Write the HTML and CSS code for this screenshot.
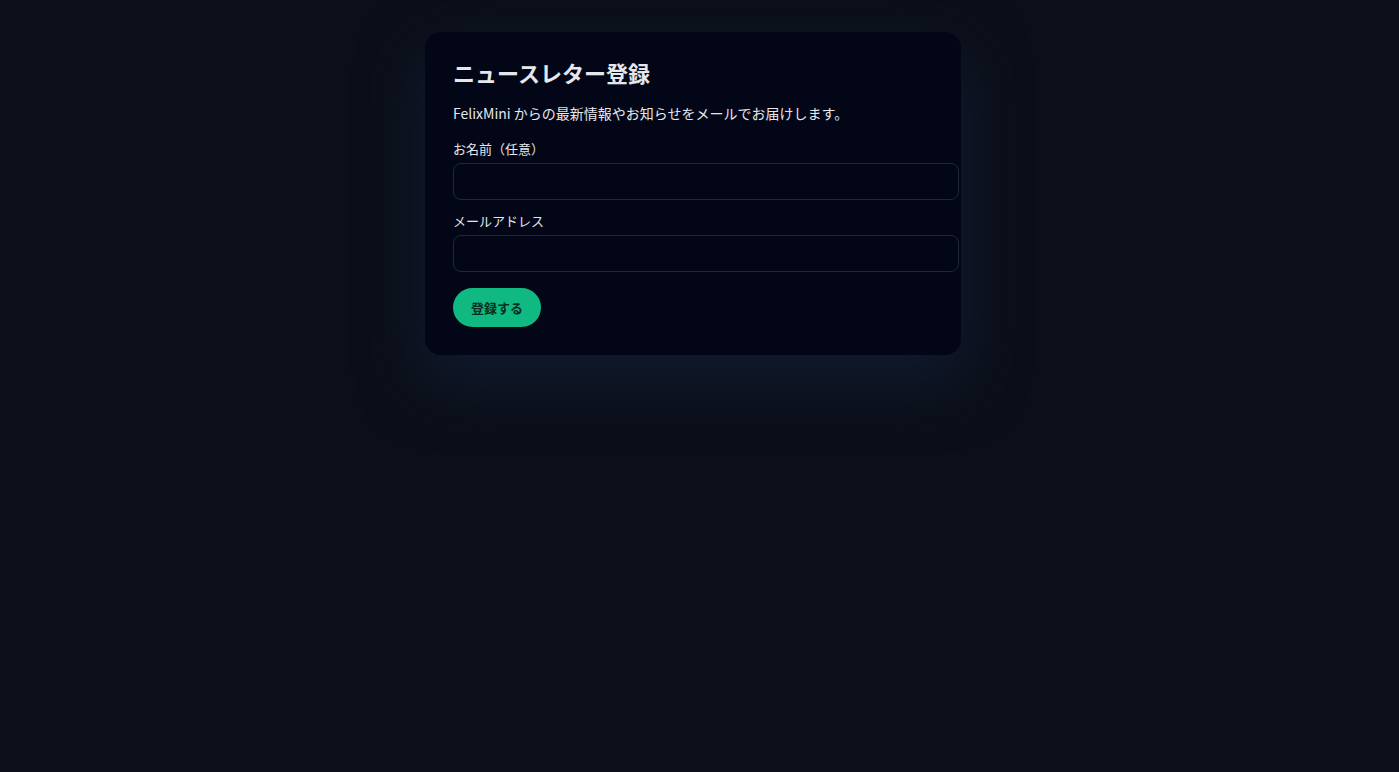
FILE: index.html
```html
<!DOCTYPE html>
<html lang="ja">
<head>
<meta charset="utf-8">
<title>ニュースレター登録</title>
<link rel="stylesheet" href="styles.css">
</head>
<body>
<main class="wrap">
  <form class="card">
    <h1 class="title">ニュースレター登録</h1>
    <p class="desc">FelixMini からの最新情報やお知らせをメールでお届けします。</p>
    <label class="field">
      <span class="label">お名前（任意）</span>
      <input class="input" type="text">
    </label>
    <label class="field">
      <span class="label">メールアドレス</span>
      <input class="input" type="email">
    </label>
    <button class="btn" type="button">登録する</button>
  </form>
</main>
</body>
</html>
```
FILE: styles.css
```css
html, body {
  margin: 0;
  padding: 0;
  background: #0b0f19;
  font-family: "Noto Sans CJK JP", "Noto Sans", sans-serif;
  color: #e5e7eb;
}
body {
  min-height: 100vh;
}
.wrap {
  max-width: 549px;
  margin: 0 auto;
  padding-top: 32px;
}
.card {
  width: 536px;
  box-sizing: border-box;
  background: #020617;
  border-radius: 16px;
  padding: 28px;
  box-shadow: 0 24px 60px 4px #111a2d;
}
.title {
  margin: 0;
  font-size: 22px;
  line-height: 24px;
  font-weight: 700;
  color: #e5e7eb;
}
.desc {
  margin: 18px 0 0;
  font-size: 14px;
  line-height: 22px;
  color: #e5e7eb;
}
.field {
  display: block;
  margin-top: 15px;
}
.field + .field {
  margin-top: 11px;
}
.label {
  display: block;
  font-size: 13px;
  line-height: 20px;
  color: #e5e7eb;
  margin-bottom: 4px;
}
.input {
  display: block;
  width: 100%;
  box-sizing: content-box;
  height: 15px;
  padding: 10px 12px;
  border: 1px solid #1f2937;
  border-radius: 8px;
  background: #020617;
  color: #e5e7eb;
  font-size: 14px;
  font-family: inherit;
  outline: none;
}
.btn {
  display: block;
  margin-top: 16px;
  height: 39px;
  padding: 0 18px;
  border: none;
  border-radius: 999px;
  background: #10b981;
  color: #052e22;
  font-family: inherit;
  font-size: 13px;
  font-weight: 700;
}
```
